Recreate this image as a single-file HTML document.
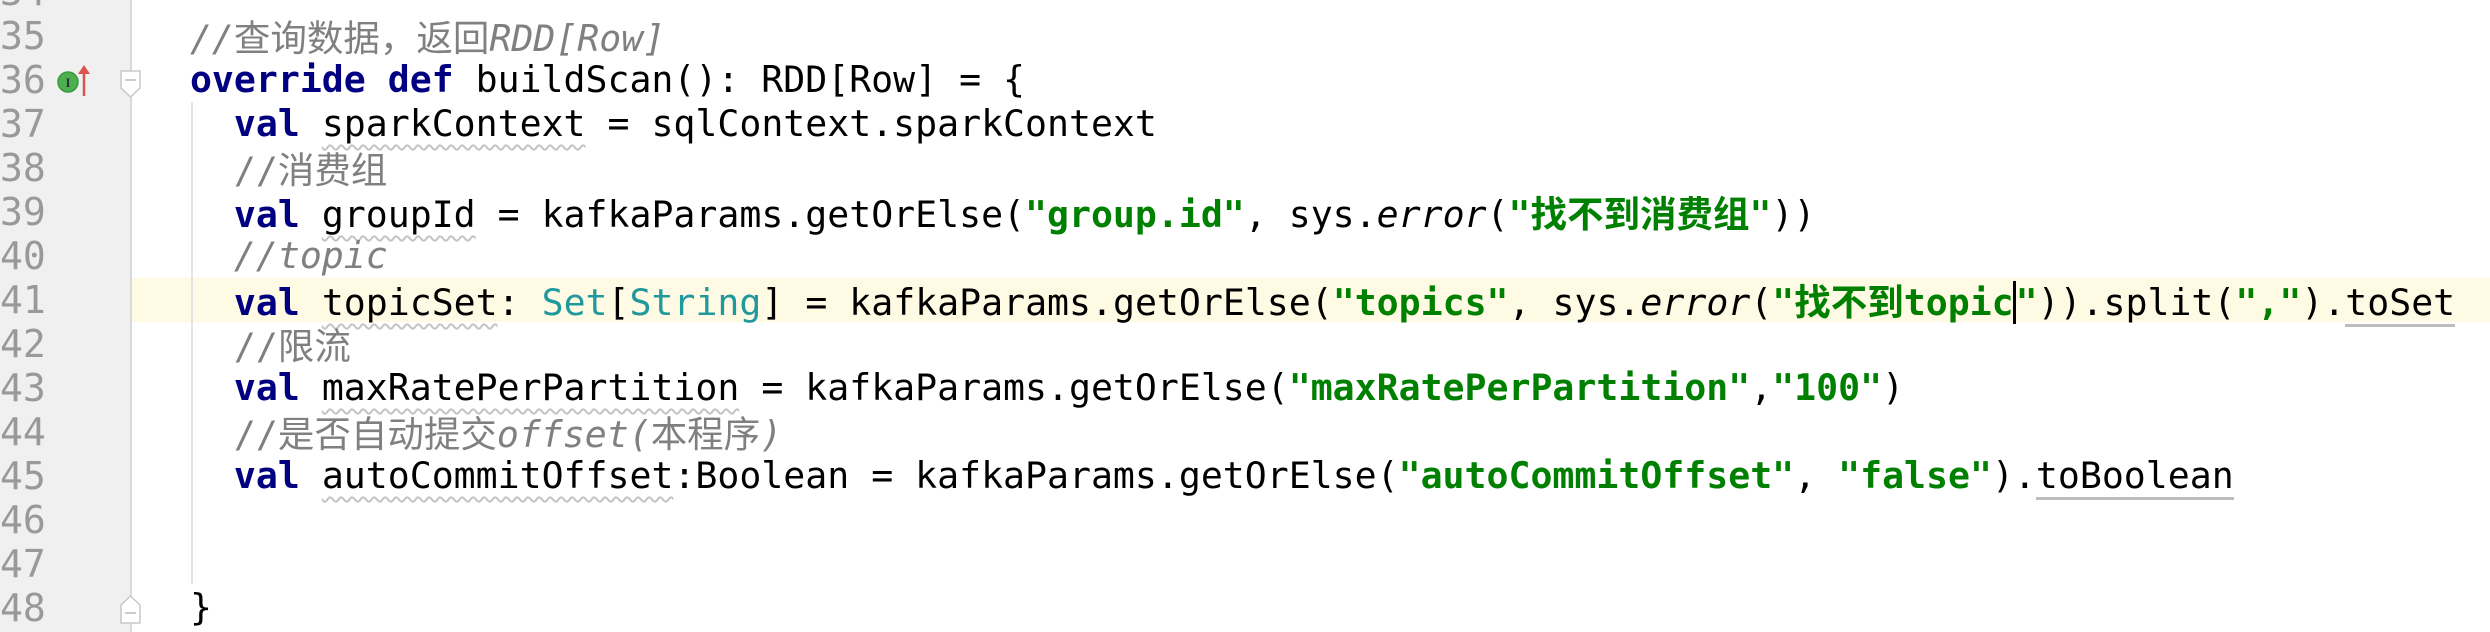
<!DOCTYPE html>
<html><head><meta charset="utf-8"><style>
html,body{margin:0;padding:0}
body{width:2490px;height:632px;overflow:hidden;background:#fff;position:relative;font-family:"DejaVu Sans Mono","Liberation Mono","Noto Sans CJK SC",monospace;font-size:36.5px}
.gut{position:absolute;left:0;top:0;width:130px;height:632px;background:#f0f0f0;border-right:2px solid #d9d9d9}
.hl{position:absolute;left:132px;top:278px;width:2358px;height:44px;background:#fffae3}
.num{position:absolute;left:0;width:44px;text-align:right;color:#999;height:44px;line-height:44px;font-size:38px}
.ln{position:absolute;left:146px;height:44px;line-height:44px;white-space:pre;color:#000}
.k{color:#000080;font-weight:bold}
.c{color:#808080}
.i{font-style:italic}
.s{color:#008000;font-weight:bold}
.t{color:#20999d}
.w{text-decoration:underline wavy #c4c4c4;text-decoration-thickness:2px;text-underline-offset:8px}
.u{border-bottom:3px solid #bdbdbd}
.cj{font-family:"Noto Sans CJK SC",sans-serif}
.guide{position:absolute;left:191px;top:102px;width:2px;height:482px;background:#e4e4e4}
</style></head><body>
<div class="gut"></div>
<div class="hl"></div>
<div class="guide"></div>
<div class="num" style="top:-30px">34</div>
<div class="num" style="top:14px">35</div>
<div class="num" style="top:58px">36</div>
<div class="num" style="top:102px">37</div>
<div class="num" style="top:146px">38</div>
<div class="num" style="top:190px">39</div>
<div class="num" style="top:234px">40</div>
<div class="num" style="top:278px">41</div>
<div class="num" style="top:322px">42</div>
<div class="num" style="top:366px">43</div>
<div class="num" style="top:410px">44</div>
<div class="num" style="top:454px">45</div>
<div class="num" style="top:498px">46</div>
<div class="num" style="top:542px">47</div>
<div class="num" style="top:586px">48</div>
<svg style="position:absolute;left:0;top:0" width="160" height="632">
<circle cx="68" cy="82" r="10" fill="#4caf50" stroke="#3a9a3e" stroke-width="1.5"/>
<text x="68" y="87" font-size="13" font-family="Liberation Serif" font-weight="bold" text-anchor="middle" fill="#333">I</text>
<line x1="84" y1="68" x2="84" y2="96" stroke="#d9534f" stroke-width="2.5"/>
<path d="M78 74 L84 65 L90 74 Z" fill="#d9534f"/>
<path d="M121 71 H140 V88 L130.5 97 L121 88 Z" fill="#fff" stroke="#c8c8c8" stroke-width="1.5"/>
<line x1="125" y1="80" x2="136" y2="80" stroke="#bbb" stroke-width="1.5"/>
<path d="M121 623 V605 L130.5 596 L140 605 V623 Z" fill="#fff" stroke="#c8c8c8" stroke-width="1.5"/>
<line x1="125" y1="613" x2="136" y2="613" stroke="#bbb" stroke-width="1.5"/>
<path d="M188 625 q3 5 6 0 q3 -5 6 0 q3 5 6 0" fill="none" stroke="#e00" stroke-width="2"/>
</svg>
<div class="ln c i" style="top:14px">  //<span class="cj" style="font-style:normal">查询数据，返回</span>RDD[Row]</div>
<div class="ln" style="top:58px">  <span class="k">override def</span> buildScan(): RDD[Row] = {</div>
<div class="ln" style="top:102px">    <span class="k">val</span> <span class="w">sparkContext</span> = sqlContext.sparkContext</div>
<div class="ln c" style="top:146px">    //<span class="cj">消费组</span></div>
<div class="ln" style="top:190px">    <span class="k">val</span> <span class="w">groupId</span> = kafkaParams.getOrElse(<span class="s">"group.id"</span>, sys.<span class="i">error</span>(<span class="s">"<span class="cj">找不到消费组</span>"</span>))</div>
<div class="ln c i" style="top:234px">    //topic</div>
<div class="ln" style="top:278px">    <span class="k">val</span> <span class="w">topicSet</span>: <span class="t">Set</span>[<span class="t">String</span>] = kafkaParams.getOrElse(<span class="s">"topics"</span>, sys.<span class="i">error</span>(<span class="s">"<span class="cj">找不到</span>topic</span><span style="border-left:3px solid #000;margin-left:-1px"></span><span class="s">"</span>)).split(<span class="s">","</span>).<span class="u">toSet</span></div>
<div class="ln c" style="top:322px">    //<span class="cj">限流</span></div>
<div class="ln" style="top:366px">    <span class="k">val</span> <span class="w">maxRatePerPartition</span> = kafkaParams.getOrElse(<span class="s">"maxRatePerPartition"</span>,<span class="s">"100"</span>)</div>
<div class="ln c" style="top:410px">    //<span class="cj">是否自动提交</span><span class="i">offset(</span><span class="cj">本程序</span><span class="i">)</span></div>
<div class="ln" style="top:454px">    <span class="k">val</span> <span class="w">autoCommitOffset</span>:Boolean = kafkaParams.getOrElse(<span class="s">"autoCommitOffset"</span>, <span class="s">"false"</span>).<span class="u">toBoolean</span></div>
<div class="ln" style="top:586px">  }</div>
</body></html>
